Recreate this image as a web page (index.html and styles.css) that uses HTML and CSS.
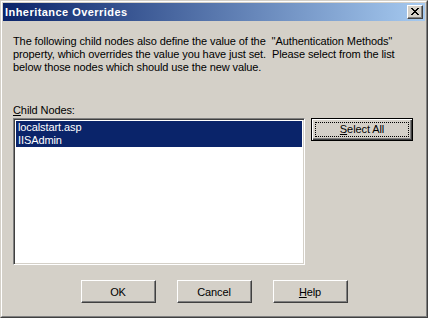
FILE: index.html
```html
<!DOCTYPE html>
<html lang="en">
<head>
  <meta charset="UTF-8">
  <title>Inheritance Overrides</title>
  <link rel="stylesheet" href="styles.css">
</head>
<body>
  <div class="window">
    <div class="frame">

      <!-- title bar -->
      <div class="titlebar">
        <span class="title">Inheritance Overrides</span>
        <button class="close-btn" aria-label="Close">
          <svg width="8" height="7" viewBox="0 0 8 7">
            <path d="M0 0h2v1h1v1h2v-1h1v-1h2v1h-1v1h-1v1h-1v1h1v1h1v1h1v1h-2v-1h-1v-1h-2v1h-1v1h-2v-1h1v-1h1v-1h1v-1h-1v-1h-1v-1h-1z" fill="#000"/>
          </svg>
        </button>
      </div>

      <div class="content">
        <p class="intro">The following child nodes also define the value of the &nbsp;''Authentication Methods''<br>
        property, which overrides the value you have just set. &nbsp;Please select from the list<br>
        below those nodes which should use the new value.</p>

        <div class="label"><u>C</u>hild Nodes:</div>

        <div class="list-row">
          <div class="listbox">
            <div class="item selected">localstart.asp</div>
            <div class="item selected">IISAdmin</div>
          </div>
          <button class="btn default-btn"><span class="focus"><u>S</u>elect All</span></button>
        </div>

        <div class="buttons">
          <button class="btn">OK</button>
          <button class="btn">Cancel</button>
          <button class="btn"><u>H</u>elp</button>
        </div>
      </div>

    </div>
  </div>
</body>
</html>
```

FILE: styles.css
```css
  /* window frame */
  body {
  margin: 0;
  padding: 0;
  font-family: "Liberation Sans", Arial, sans-serif;
  font-size: 11px;
  letter-spacing: -0.1px;
  color: #000;
  background: #d4d0c8;
  }
  .window {
    width: 428px;
    height: 318px;
    box-sizing: border-box;
    border: 1px solid;
    border-color: #d4d0c8 #404040 #404040 #d4d0c8;
    background: #d4d0c8;
  }
  .frame {
    height: 100%;
    box-sizing: border-box;
    border: 1px solid;
    border-color: #fff #808080 #808080 #fff;
    padding: 1px;
    display: flex;
    flex-direction: column;
  }

  /* title bar */
  .titlebar {
    height: 18px;
    display: flex;
    align-items: center;
    justify-content: space-between;
    padding: 0 2px 0 2px;
    background: linear-gradient(to right, #0a246a, #a6caf0);
  }
  .title {
    color: #fff;
    font-weight: bold;
    font-size: 11px;
    letter-spacing: 0.45px;
  }
  .close-btn {
    width: 16px;
    height: 14px;
    padding: 0;
    box-sizing: border-box;
    background: #d4d0c8;
    border: 1px solid;
    border-color: #fff #404040 #404040 #fff;
    box-shadow: inset -1px -1px #808080;
    display: flex;
    align-items: center;
    justify-content: center;
  }
  .close-btn svg {
    display: block;
    margin: 0 1px 1px 0;
  }

  /* dialog body */
  .content {
    flex: 1;
    padding: 0 10px 0 10px;
    display: flex;
    flex-direction: column;
  }
  .intro {
    margin: 14px 0 0 0;
    line-height: 13px;
    white-space: nowrap;
  }
  .label {
    margin-top: 30px;
    line-height: 13px;
  }
  .list-row {
    display: flex;
    align-items: flex-start;
    margin-top: 1px;
    gap: 6px;
  }
  .listbox {
    width: 292px;
    height: 147px;
    box-sizing: border-box;
    border: 1px solid;
    border-color: #808080 #fff #fff #808080;
    box-shadow: inset 1px 1px #404040, inset -1px -1px #d4d0c8;
    background: #fff;
    padding: 2px 2px;
  }
  .item {
    height: 13px;
    line-height: 13px;
    padding-left: 2px;
    white-space: nowrap;
  }
  .item.selected {
    background: #0a246a;
    color: #fff;
  }

  /* push buttons */
  .btn {
    width: 75px;
    height: 23px;
    box-sizing: border-box;
    padding: 0;
    font-family: inherit;
    font-size: 11px;
    letter-spacing: -0.1px;
    color: #000;
    background: #d4d0c8;
    border: 1px solid;
    border-color: #fff #404040 #404040 #fff;
    box-shadow: inset -1px -1px #808080;
  }
  .default-btn {
    width: 102px;
    border: 1px solid #000;
    box-shadow: inset 1px 1px #fff, inset -1px -1px #404040, inset -2px -2px #808080;
    padding: 3px;
  }
  .default-btn .focus {
    display: block;
    height: 100%;
    box-sizing: border-box;
    border: 1px dotted #000;
    line-height: 13px;
  }
  .buttons {
    display: flex;
    justify-content: center;
    gap: 21px;
    margin-top: 15px;
  }
```
